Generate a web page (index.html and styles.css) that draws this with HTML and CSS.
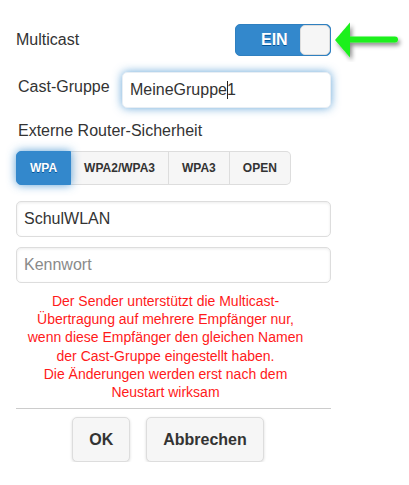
FILE: index.html
```html
<!DOCTYPE html>
<html lang="de">
<head>
<meta charset="utf-8">
<link rel="stylesheet" href="styles.css">
</head>
<body>
<div class="dialog">
  <div class="row row-multicast">
    <span class="label">Multicast</span>
    <div class="flip">
      <span class="flip-text">EIN</span>
      <span class="flip-knob"></span>
    </div>
    <svg class="arrow" width="76" height="44" viewBox="0 0 76 44">
      <defs>
        <filter id="sh" x="-20%" y="-30%" width="150%" height="180%">
          <feDropShadow dx="2" dy="3" stdDeviation="2" flood-color="#000" flood-opacity="0.45"/>
        </filter>
      </defs>
      <g filter="url(#sh)" fill="#1df01d">
        <polygon points="4,22 19,4.5 19,39.5"/>
        <line x1="17" y1="21.5" x2="64" y2="21.5" stroke="#1df01d" stroke-width="6" stroke-linecap="round"/>
      </g>
    </svg>
  </div>

  <div class="row row-cast">
    <span class="label label-cast">Cast-Gruppe</span>
    <div class="field field-focus" role="textbox">MeineGruppe<span class="caret"></span>1</div>
  </div>

  <div class="section-label">Externe Router-Sicherheit</div>
  <div class="segments">
    <span class="seg seg-active">WPA</span>
    <span class="seg">WPA2/WPA3</span>
    <span class="seg">WPA3</span>
    <span class="seg">OPEN</span>
  </div>

  <input class="field field-ssid" type="text" value="SchulWLAN">
  <input class="field field-pass" type="text" placeholder="Kennwort">

  <p class="note">Der Sender unterstützt die Multicast-<br>Übertragung auf mehrere Empfänger nur,<br>wenn diese Empfänger den gleichen Namen<br>der Cast-Gruppe eingestellt haben.<br>Die Änderungen werden erst nach dem<br>Neustart wirksam</p>

  <hr class="divider">

  <div class="actions">
    <button class="btn">OK</button>
    <button class="btn">Abbrechen</button>
  </div>
</div>
</body>
</html>
```
FILE: styles.css
```css
html, body {
  margin: 0;
  padding: 0;
  background: #fff;
}
body {
  font-family: "Liberation Sans", Arial, sans-serif;
  color: #333;
  font-size: 16px;
}
.dialog {
  width: 315px;
  padding: 24px 0 0 16px;
}
.row {
  display: flex;
  align-items: center;
}
.row-multicast {
  position: relative;
  justify-content: space-between;
  height: 32px;
}
.label {
  font-size: 16px;
  line-height: 18px;
}
.flip {
  box-sizing: border-box;
  width: 96px;
  height: 32px;
  background: #3388cc;
  border: 1px solid #2f80c0;
  border-radius: 5px;
  display: flex;
  align-items: center;
  justify-content: space-between;
  padding: 0 0 0 25px;
}
.flip-text {
  color: #fff;
  font-weight: bold;
  font-size: 16px;
  text-shadow: 0 1px 0 #005599;
}
.flip-knob {
  box-sizing: border-box;
  width: 30px;
  height: 30px;
  background: #f6f6f6;
  border: 1px solid #dddddd;
  border-radius: 5px;
}
.arrow {
  position: absolute;
  left: 315px;
  top: -6px;
}
.row-cast {
  margin-top: 16px;
  justify-content: space-between;
}
.label-cast {
  padding-left: 2px;
  margin-bottom: 6px;
}
.field {
  box-sizing: border-box;
  height: 36px;
  border: 1px solid #dddddd;
  border-radius: 5px;
  background: #fff;
  font-family: "Liberation Sans", Arial, sans-serif;
  font-size: 16px;
  color: #333;
  padding: 0 7px;
  box-shadow: inset 0 1px 3px rgba(0,0,0,0.08);
  display: block;
}
.field-focus {
  width: 209px;
  display: flex;
  align-items: center;
  border-color: #e8eef4;
  box-shadow: 0 0 10px rgba(51,136,204,0.75);
  line-height: 18px;
}
.caret {
  display: inline-block;
  width: 1px;
  height: 18px;
  background: #222;
  margin-right: -1px;
}
.section-label {
  margin-top: 14px;
  padding-left: 2px;
  font-size: 16px;
  line-height: 18px;
}
.segments {
  margin-top: 11px;
  display: flex;
  width: max-content;
  height: 34px;
  box-sizing: border-box;
}
.seg {
  display: flex;
  align-items: center;
  padding: 0 13px;
  background: #f6f6f6;
  border: 1px solid #dddddd;
  border-left: none;
  font-size: 12px;
  font-weight: bold;
  color: #333;
  text-shadow: 0 1px 0 #f3f3f3;
}
.seg:last-child {
  border-radius: 0 5px 5px 0;
}
.seg-active {
  background: #3388cc;
  border: 1px solid #3388cc;
  color: #fff;
  text-shadow: 0 1px 0 #005599;
  border-radius: 5px 0 0 5px;
  box-shadow: 0 0 10px rgba(51,136,204,0.8);
  position: relative;
  z-index: 1;
}
.field-ssid {
  margin-top: 16px;
  width: 315px;
}
.field-pass {
  margin-top: 10px;
  width: 315px;
}
.field-pass::placeholder {
  color: #8a8a8a;
}
.note {
  margin: 9px 0 0 0;
  padding-right: 16px;
  text-align: center;
  color: #ff1a1a;
  font-size: 14px;
  line-height: 18.2px;
}
.divider {
  margin: 7px 0 0 0;
  border: none;
  border-top: 1px solid #cccccc;
  height: 0;
}
.actions {
  margin-top: 8px;
  display: flex;
  justify-content: center;
  gap: 16px;
  padding-right: 11px;
}
.btn {
  box-sizing: border-box;
  height: 45px;
  padding: 0 16px;
  background: #f6f6f6;
  border: 1px solid #dddddd;
  border-radius: 5px;
  font-family: "Liberation Sans", Arial, sans-serif;
  font-size: 16px;
  font-weight: bold;
  color: #333;
  text-shadow: 0 1px 0 #f3f3f3;
  box-shadow: 0 1px 3px rgba(0,0,0,0.15);
}
```
